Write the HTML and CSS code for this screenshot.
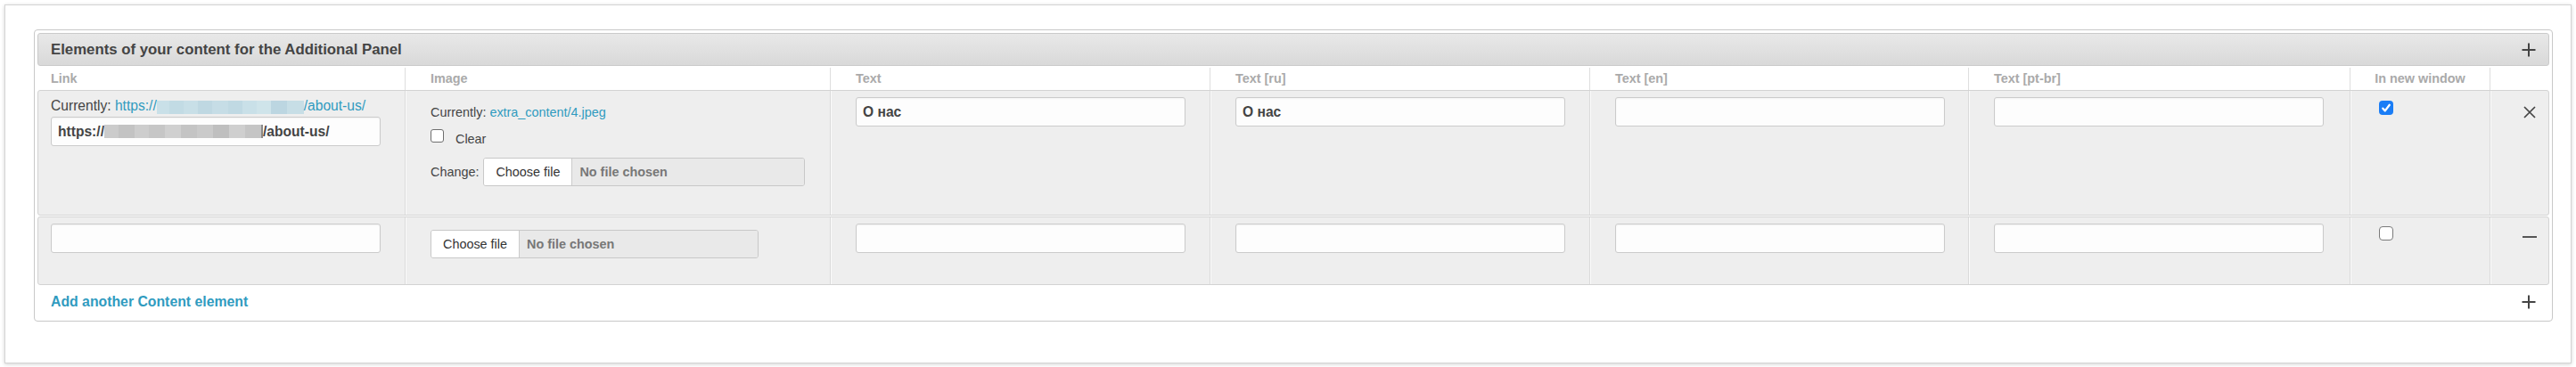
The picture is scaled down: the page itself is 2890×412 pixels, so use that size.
FILE: index.html
```html
<!DOCTYPE html>
<html lang="en">
<head>
<meta charset="utf-8">
<title>Elements of your content for the Additional Panel</title>
<link rel="stylesheet" href="styles.css">
</head>
<body>
<div class="card">
  <div class="group">
    <div class="group-head">
      <h2>Elements of your content for the Additional Panel</h2>
      <svg class="ico" width="16" height="16" viewBox="0 0 16 16"><path d="M8 0.5v15M0.5 8h15" stroke="#444" stroke-width="2" fill="none"/></svg>
    </div>
    <div class="grid thead">
      <div class="th">Link</div>
      <div class="th">Image</div>
      <div class="th">Text</div>
      <div class="th">Text [ru]</div>
      <div class="th">Text [en]</div>
      <div class="th">Text [pt-br]</div>
      <div class="th center">In new window</div>
      <div class="th"></div>
    </div>

    <div class="grid row r1">
      <div class="td link-cell">
        <div class="current">Currently: <a class="lnk">https://<span class="blur blur-blue"></span>/about-us/</a></div>
        <div class="fake-input"><span>https://</span><span class="blur blur-gray"></span><span>/about-us/</span></div>
      </div>
      <div class="td img-cell">
        <div class="cur-img">Currently: <a class="lnk">extra_content/4.jpeg</a></div>
        <div class="clear-line"><span class="cb small"></span><span class="clear-txt">Clear</span></div>
        <div class="change-line"><span>Change:</span>
          <div class="file"><span class="btn">Choose file</span><span class="nf">No file chosen</span></div>
        </div>
      </div>
      <div class="td"><input class="txt" type="text" value="О нас"></div>
      <div class="td"><input class="txt" type="text" value="О нас"></div>
      <div class="td"><input class="txt" type="text" value=""></div>
      <div class="td"><input class="txt" type="text" value=""></div>
      <div class="td cb-cell">
        <svg class="cbx" width="16" height="16" viewBox="0 0 16 16"><rect width="16" height="16" rx="4" fill="#1a7df6"/><path d="M4.3 8.7l2.5 2.7L11.8 4.8" fill="none" stroke="#fff" stroke-width="2.3" stroke-linecap="round" stroke-linejoin="round"/></svg>
      </div>
      <div class="td del-cell x">
        <svg width="14" height="14" viewBox="0 0 14 14"><path d="M1 1l12 12M13 1L1 13" stroke="#444" stroke-width="1.7" fill="none"/></svg>
      </div>
    </div>

    <div class="grid row r2">
      <div class="td"><div class="fake-input"></div></div>
      <div class="td img-cell">
        <div class="file"><span class="btn">Choose file</span><span class="nf">No file chosen</span></div>
      </div>
      <div class="td"><input class="txt" type="text" value=""></div>
      <div class="td"><input class="txt" type="text" value=""></div>
      <div class="td"><input class="txt" type="text" value=""></div>
      <div class="td"><input class="txt" type="text" value=""></div>
      <div class="td cb-cell"><span class="cb"></span></div>
      <div class="td del-cell minus">
        <svg width="16" height="4" viewBox="0 0 16 4"><path d="M0 2h16" stroke="#555" stroke-width="2" fill="none"/></svg>
      </div>
    </div>

    <div class="add-row">
      <a class="add">Add another Content element</a>
      <svg class="ico" width="16" height="16" viewBox="0 0 16 16"><path d="M8 0.5v15M0.5 8h15" stroke="#444" stroke-width="2" fill="none"/></svg>
    </div>
  </div>
</div>
</body>
</html>
```

FILE: styles.css
```css
* { box-sizing: border-box; }
html, body { margin: 0; padding: 0; background: #fff; }
body { font-family: "Liberation Sans", Arial, sans-serif; color: #444; }

.card {
  margin: 5px;
  height: 403px;
  background: #fff;
  border: 1px solid #d4d4d4;
  box-shadow: 0 1px 4px rgba(0,0,0,.18);
  padding: 27px 20px 46px 32px;
}

.group {
  border: 1px solid #c8c8c8;
  border-radius: 4px;
  padding: 3px;
}

.group-head {
  height: 37px;
  display: flex;
  align-items: center;
  justify-content: space-between;
  padding: 0 14px 0 14px;
  border: 1px solid #cacaca;
  border-radius: 3px;
  background: linear-gradient(#e8e8e8, #d9d9d9);
}
.group-head h2 {
  margin: 0;
  font-size: 16.8px;
  font-weight: bold;
  color: #444;
}
.ico { display: block; }

.grid {
  display: grid;
  grid-template-columns: 411px 477px 426px 426px 425px 428px 157px 1fr;
}

.thead {
  padding-top: 2px;
  border-left: 1px solid transparent;
  border-right: 1px solid transparent;
}
.th {
  height: 25px;
  line-height: 25px;
  font-size: 14.4px;
  font-weight: bold;
  color: #aaa;
  padding-left: 28px;
  border-left: 1px solid #dedede;
  white-space: nowrap;
}
.th:first-child { border-left: 0; padding-left: 14px; }
.th.center { padding: 0; text-align: center; }

.row {
  background: #eee;
  border: 1px solid #d3d3d3;
  border-radius: 3px;
}
.row + .row { margin-top: 1px; }

.td {
  padding: 7px 28px;
  border-left: 1px solid #dadada;
  box-shadow: inset 1px 0 0 #fbfbfb;
}
.td:first-child { border-left: 0; box-shadow: none; padding-left: 14px; }

.lnk { color: #309bbf; text-decoration: none; }

.current {
  font-size: 15.6px;
  line-height: 20px;
  height: 20px;
  white-space: nowrap;
}

.blur { display: inline-block; }
.blur-blue {
  width: 165px;
  height: 15px;
  vertical-align: -4px;
  background: linear-gradient(90deg,
    #c9e0e8 0 14px, #c2dbe4 14px 30px, #c8dfe7 30px 46px, #bfd8e2 46px 62px,
    #c6dde6 62px 80px, #c0d9e3 80px 96px, #c9e0e8 96px 112px, #cfe4ea 112px 128px,
    #bcd6e1 128px 146px, #c7dee6 146px 165px);
}
.blur-gray {
  width: 178px;
  height: 15px;
  background: linear-gradient(90deg,
    #cbcbcb 0 16px, #c3c3c3 16px 34px, #cdcdcd 34px 50px, #c6c6c6 50px 68px,
    #d0d0d0 68px 86px, #c4c4c4 86px 104px, #cacaca 104px 122px, #bfbfbf 122px 140px,
    #cfcfcf 140px 158px, #c5c5c5 158px 176px, #8a8a8a 176px 178px);
}

.fake-input, .txt {
  width: 370px;
  height: 33px;
  border: 1px solid #cbcbcb;
  border-radius: 3px;
  background: #fdfdfd;
  box-shadow: inset 0 1px 2px rgba(0,0,0,.05);
  font-family: "Liberation Sans", Arial, sans-serif;
  font-size: 15.6px;
  font-weight: bold;
  color: #444;
  padding: 0 7px;
}
.txt { display: block; margin: 0; outline: none; }
.fake-input {
  display: flex;
  align-items: center;
  white-space: nowrap;
}
.link-cell .fake-input { margin-top: 2px; }

.img-cell { padding-top: 14px; }
.r1 .img-cell { padding-bottom: 32px; }
.r2 .img-cell { padding-bottom: 29px; }

.cur-img, .clear-line, .change-line { font-size: 14.4px; color: #444; white-space: nowrap; }
.cur-img { line-height: 20px; height: 20px; }
.clear-line {
  margin-top: 7px;
  height: 23px;
  display: flex;
  align-items: flex-start;
}
.clear-line .cb { margin-top: 2px; margin-right: 13px; }
.clear-txt { line-height: 26px; }
.change-line {
  margin-top: 11px;
  display: flex;
  align-items: center;
  gap: 5px;
}

.file {
  display: flex;
  width: 368px;
  height: 32px;
  border: 1px solid #c8c8c8;
  border-radius: 3px;
  overflow: hidden;
  font-size: 14.4px;
}
.file .btn {
  display: flex;
  align-items: center;
  background: #fff;
  border-right: 1px solid #cbcbcb;
  padding: 0 13px;
  color: #333;
}
.file .nf {
  flex: 1;
  display: flex;
  align-items: center;
  background: #e9e9e9;
  padding-left: 8px;
  font-weight: bold;
  color: #777;
}

.cb {
  display: block;
  width: 16px;
  height: 16px;
  border: 1px solid #7a7a7a;
  border-radius: 4px;
  background: #fff;
}
.cb.small { width: 15px; height: 15px; border-color: #6e6e6e; border-radius: 3px; }
.cb-cell .cb, .cb-cell .cbx { display: block; margin: 3px 3px 3px 4px; }
.r1 .cb-cell .cbx { margin-top: 4px; }

.del-cell {
  display: flex;
  justify-content: flex-end;
  align-items: flex-start;
}
.del-cell.x { padding: 17px 14px 0 0; }
.del-cell.minus { padding: 20px 13px 0 0; }

.add-row {
  height: 37px;
  display: flex;
  align-items: center;
  justify-content: space-between;
  padding: 0 15px 0 15px;
}
.add {
  color: #309bbf;
  font-size: 15.8px;
  font-weight: bold;
  text-decoration: none;
}
```
